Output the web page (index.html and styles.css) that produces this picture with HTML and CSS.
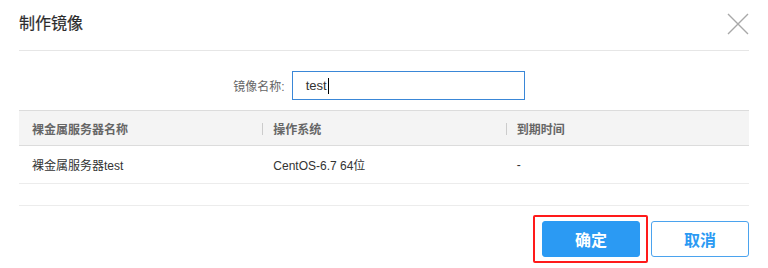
FILE: index.html
```html
<!DOCTYPE html>
<html>
<head>
    <meta charset="utf-8">
    <title>制作镜像</title>
    <link rel="stylesheet" href="styles.css">
</head>
<body>
    <div class="dialog">
        <div class="dialog-header">
            <h2 class="dialog-title">制作镜像</h2>
            <span class="close">
                <svg width="22" height="22" viewBox="0 0 22 22">
                    <path d="M1 1 L21 21 M21 1 L1 21" stroke="#a8a8a8" stroke-width="1.4" fill="none"/>
                </svg>
            </span>
        </div>

        <div class="form-row">
            <label class="form-label">镜像名称:</label>
            <div class="text-input">test<span class="caret"></span></div>
        </div>

        <table class="grid">
            <thead>
                <tr>
                    <th><span class="th-text">裸金属服务器名称</span></th>
                    <th><span class="sep"></span><span class="th-text">操作系统</span></th>
                    <th><span class="sep"></span><span class="th-text">到期时间</span></th>
                </tr>
            </thead>
            <tbody>
                <tr>
                    <td class="first">裸金属服务器test</td>
                    <td>CentOS-6.7 64位</td>
                    <td>-</td>
                </tr>
            </tbody>
        </table>

        <div class="dialog-footer">
            <span class="highlight">
                <button class="btn btn-primary">确定</button>
            </span>
            <button class="btn btn-default">取消</button>
        </div>
    </div>
</body>
</html>
```

FILE: styles.css
```css
body {
    margin: 0;
    background: #fff;
    font-family: "Liberation Sans", "Noto Sans CJK SC", sans-serif;
    color: #333;
}
.dialog {
    width: 730px;
    padding: 0 19px;
}
.dialog-header {
    height: 50px;
    border-bottom: 1px solid #e6e6e6;
    display: flex;
    align-items: center;
    justify-content: space-between;
}
.dialog-title {
    margin: 0;
    font-size: 16px;
    font-weight: normal;
    color: #2b2b2b;
    line-height: 20px;
    margin-top: -3px;
    -webkit-text-stroke: 0.2px #2b2b2b;
}
.close {
    width: 22px;
    height: 22px;
    margin-top: -3px;
    display: block;
}
.close svg {
    display: block;
}
.form-row {
    display: flex;
    justify-content: center;
    align-items: center;
    margin-top: 20px;
    padding-right: 10px;
}
.form-label {
    font-size: 12px;
    color: #666;
    margin-right: 7px;
}
.text-input {
    width: 218px;
    height: 27px;
    border: 1px solid #3a87d7;
    padding-left: 13px;
    font-size: 13px;
    line-height: 27px;
    color: #333;
    display: flex;
    align-items: center;
}
.caret {
    display: inline-block;
    width: 1px;
    height: 16px;
    background: #000;
    margin-left: 1px;
}
.grid {
    width: 100%;
    margin-top: 10px;
    border-collapse: collapse;
    table-layout: fixed;
    font-size: 12px;
}
.grid th {
    background: #f4f4f4;
    border-top: 1px solid #dcdcdc;
    border-bottom: 1px solid #dcdcdc;
    height: 34px;
    padding: 0;
    text-align: left;
    font-weight: bold;
    color: #666;
}
.grid th:first-child .th-text {
    padding-left: 13px;
}
.sep {
    display: inline-block;
    width: 1px;
    height: 12px;
    background: #ccc;
    margin-right: 10px;
    vertical-align: -1px;
}
.grid td {
    height: 37px;
    padding: 0 0 0 11px;
    border-bottom: 1px solid #ececec;
    color: #333;
}
.grid td.first {
    padding-left: 13px;
}
.dialog-footer {
    margin-top: 21px;
    border-top: 1px solid #ececec;
    padding-top: 9px;
    display: flex;
    justify-content: flex-end;
    align-items: center;
}
.highlight {
    display: inline-flex;
    border: 2px solid #ff1a1a;
    border-radius: 2px;
    padding: 4px 6px 4px 7px;
    margin-right: 3px;
}
.btn {
    width: 98px;
    height: 36px;
    border-radius: 3px;
    font-size: 16px;
    font-weight: bold;
    font-family: "Liberation Sans", "Noto Sans CJK SC", sans-serif;
    cursor: pointer;
}
.btn-primary {
    background: #2b9af3;
    border: 1px solid #2b9af3;
    color: #fff;
}
.btn-default {
    background: #fff;
    border: 1px solid #4ba3ee;
    color: #2b9af3;
}
```
